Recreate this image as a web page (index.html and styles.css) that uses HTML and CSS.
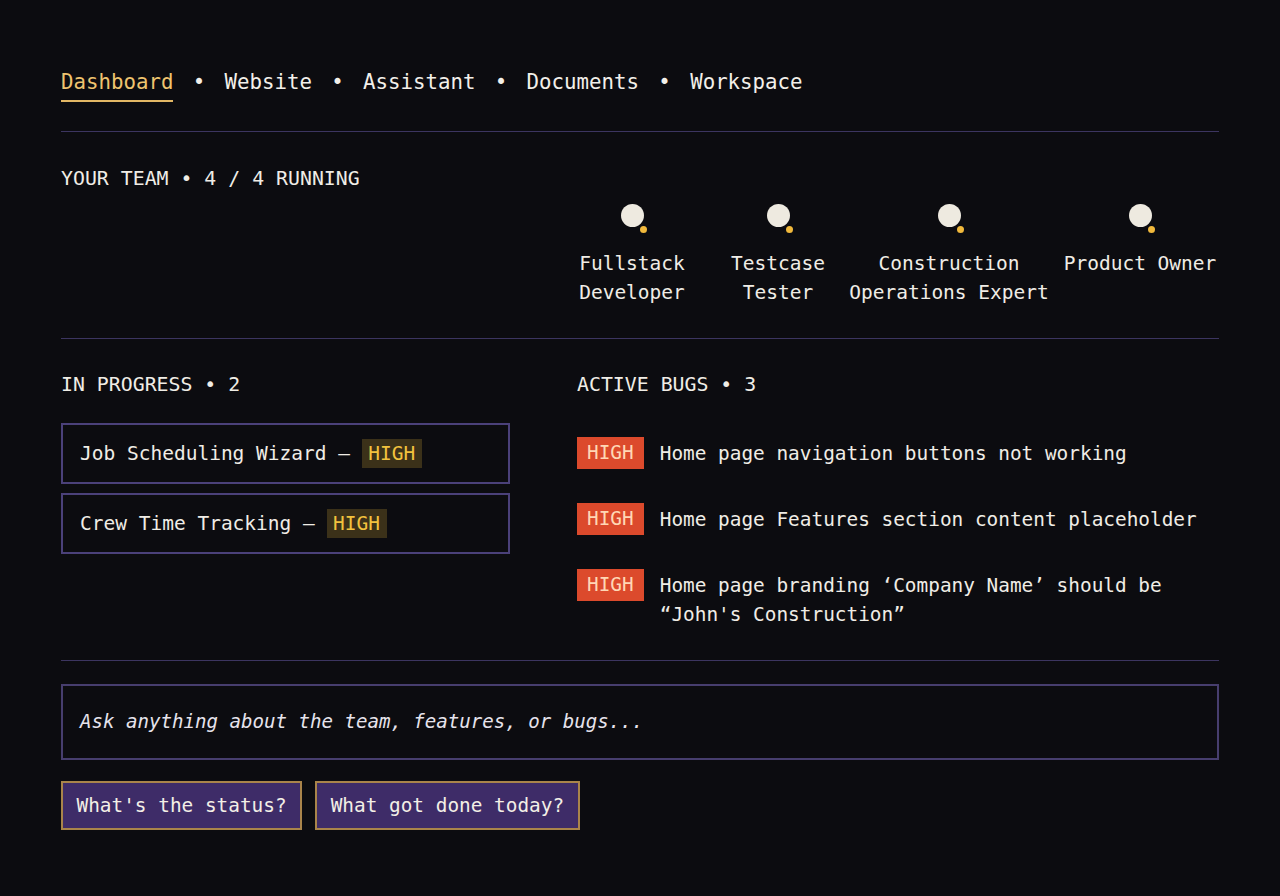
FILE: index.html
```html
<!DOCTYPE html>
<html lang="en">
<head>
<meta charset="utf-8">
<title>Dashboard</title>
<link rel="stylesheet" href="styles.css">
</head>
<body>
<div class="page">
  <nav class="nav">
    <a class="nav-item active">Dashboard</a>
    <span class="sep">•</span>
    <a class="nav-item">Website</a>
    <span class="sep">•</span>
    <a class="nav-item">Assistant</a>
    <span class="sep">•</span>
    <a class="nav-item">Documents</a>
    <span class="sep">•</span>
    <a class="nav-item">Workspace</a>
  </nav>
  <hr class="rule rule-nav">

  <section class="team">
    <h2 class="label">YOUR TEAM • 4 / 4 RUNNING</h2>
    <div class="members">
      <div class="member m1">
        <div class="avatar"><span class="dot"></span></div>
        <div class="name">Fullstack<br>Developer</div>
      </div>
      <div class="member m2">
        <div class="avatar"><span class="dot"></span></div>
        <div class="name">Testcase<br>Tester</div>
      </div>
      <div class="member m3">
        <div class="avatar"><span class="dot"></span></div>
        <div class="name">Construction<br>Operations Expert</div>
      </div>
      <div class="member m4">
        <div class="avatar"><span class="dot"></span></div>
        <div class="name">Product Owner</div>
      </div>
    </div>
  </section>
  <hr class="rule rule-team">

  <section class="work">
    <div class="col">
      <h2 class="label">IN PROGRESS • 2</h2>
      <div class="cards">
        <div class="card">Job Scheduling Wizard — <span class="tag">HIGH</span></div>
        <div class="card">Crew Time Tracking — <span class="tag">HIGH</span></div>
      </div>
    </div>
    <div class="col">
      <h2 class="label">ACTIVE BUGS • 3</h2>
      <ul class="bugs">
        <li class="bug"><span class="sev">HIGH</span><span class="bug-text">Home page navigation buttons not working</span></li>
        <li class="bug"><span class="sev">HIGH</span><span class="bug-text">Home page Features section content placeholder</span></li>
        <li class="bug"><span class="sev">HIGH</span><span class="bug-text">Home page branding ‘Company Name’ should be<br>“John's Construction”</span></li>
      </ul>
    </div>
  </section>
  <hr class="rule rule-work">

  <div class="ask">Ask anything about the team, features, or bugs...</div>
  <div class="chips">
    <button class="chip">What's the status?</button>
    <button class="chip">What got done today?</button>
  </div>
</div>
</body>
</html>
```

FILE: styles.css
```css
html, body {
  margin: 0;
  padding: 0;
  background: #0c0c10;
}

body {
  color: #f0ede6;
  font-family: "DejaVu Sans Mono", "Liberation Mono", monospace;
  font-size: 19.5px;
}

.page {
  padding: 67px 61px 40px;
}

.nav {
  display: flex;
  align-items: flex-start;
  gap: 19.3px;
  font-size: 20.75px;
  line-height: 30px;
}

.nav-item {
  color: #f3f0ea;
  padding-bottom: 3px;
  border-bottom: 2px solid transparent;
}

.nav-item.active {
  color: #efc46f;
  border-bottom-color: #e2b765;
}

.sep {
  color: #f3f0ea;
}

.rule {
  border: 0;
  height: 1px;
  background: #3c3560;
  margin: 0;
}

.rule-nav { margin-top: 29px; }

.label {
  margin: 0;
  font-size: 19.85px;
  font-weight: normal;
  line-height: 28px;
  color: #f0ede6;
}

.team {
  padding-top: 33px;
}

.members {
  display: flex;
  justify-content: flex-end;
  gap: 12px;
  margin-top: 11px;
}

.member {
  display: flex;
  flex-direction: column;
  align-items: center;
  text-align: center;
}

.m1 { width: 150px; }
.m2 { width: 118px; }
.m3 { width: 200px; }
.m4 { width: 158px; }

.avatar {
  position: relative;
  width: 23px;
  height: 23px;
  border-radius: 50%;
  background: #eeeae0;
}

.dot {
  position: absolute;
  left: 19px;
  top: 22px;
  width: 7px;
  height: 7px;
  border-radius: 50%;
  background: #f1b93c;
}

.name {
  margin-top: 22px;
  line-height: 29px;
  white-space: nowrap;
}

.rule-team { margin-top: 31px; }

.work {
  display: grid;
  grid-template-columns: 449px 1fr;
  column-gap: 67px;
  padding-top: 32px;
}

.cards {
  display: flex;
  flex-direction: column;
  gap: 9px;
  margin-top: 24px;
}

.card {
  border: 2px solid #4b417a;
  padding: 14px 17px;
  line-height: 29px;
  white-space: nowrap;
}

.tag {
  display: inline-block;
  background: #3b3119;
  color: #f2c23e;
  padding: 0 6.5px;
  line-height: 29px;
}

.bugs {
  list-style: none;
  margin: 38px 0 0;
  padding: 0;
  display: flex;
  flex-direction: column;
  gap: 34px;
  font-size: 19.4px;
}

.bug {
  display: flex;
  align-items: flex-start;
  gap: 16px;
}

.sev {
  flex: none;
  background: #dc4a2c;
  color: #ffd7b5;
  padding: 0 10px;
  line-height: 32px;
}

.bug-text {
  line-height: 29px;
  padding-top: 1.5px;
}

.rule-work { margin-top: 31px; }

.ask {
  margin-top: 23px;
  border: 2px solid #473e6e;
  box-sizing: border-box;
  height: 76px;
  padding: 0 17px;
  display: flex;
  align-items: center;
  font-style: italic;
  font-size: 19.1px;
  color: #e6e3ec;
}

.chips {
  display: flex;
  gap: 13px;
  margin-top: 21px;
}

.chip {
  font: inherit;
  font-size: 19.4px;
  color: #f3efe6;
  background: #3e2c68;
  border: 2px solid #a9844a;
  height: 49px;
  padding: 0 13.5px;
  cursor: pointer;
}
```
